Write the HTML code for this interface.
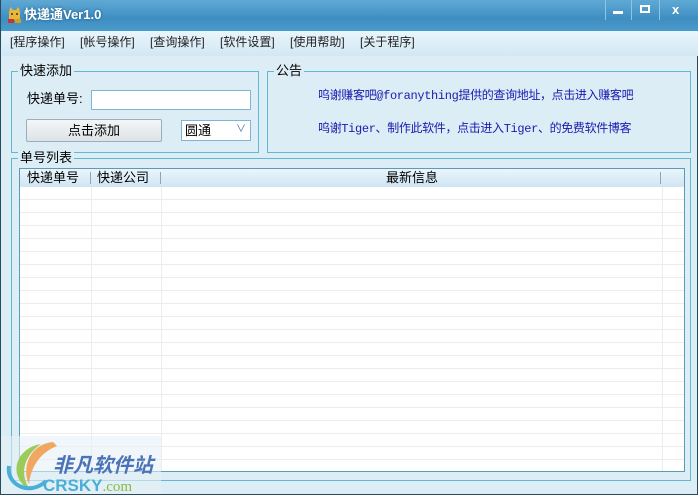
<!DOCTYPE html>
<html><head><meta charset="utf-8"><style>
*{margin:0;padding:0;box-sizing:border-box}
body{width:698px;height:495px;overflow:hidden;font-family:"Liberation Sans","Noto Sans CJK SC",sans-serif;font-size:12px;color:#000;background:#1a2a3a;position:relative;line-height:1.2}
.win{position:absolute;left:0;top:0;width:698px;height:495px;background:#dcedf5;border:1px solid #2a4a60;border-top:none}
.title{position:absolute;left:0;top:0;width:698px;height:31px;background:linear-gradient(#5fa9d4,#3f8ec2 60%,#4a9acb);}
.title span{position:absolute;left:23px;top:7px;color:#fff;font-weight:bold;font-size:13px;text-shadow:0 0 3px #1d5a85}
.menu{position:absolute;left:1px;top:31px;width:696px;height:25px;background:linear-gradient(#e9f5fb,#d2e8f4);}
.menu span{position:absolute;top:5px;color:#222;font-size:12px}
.gb{position:absolute;border:1px solid #5fb8d4}
.gb .lg{position:absolute;top:-9px;left:6px;background:#dcedf5;padding:0 2px;font-size:13px;line-height:16px}
.abs{position:absolute}
.blue{color:#1a1ab0;font-size:12px;letter-spacing:-0.35px;font-family:"Liberation Mono","Noto Sans CJK SC",monospace}
</style></head><body>
<div class="win">
<div class="title">
<svg class="abs" style="left:6px;top:7px" width="16" height="17"><rect x="2" y="3" width="11" height="10" rx="2" fill="#e9b53a"/><path d="M2 3 L4 0 L6 3 M9 3 L11 0 L13 3" fill="#e9b53a"/><circle cx="5" cy="7" r="1" fill="#333"/><circle cx="10" cy="7" r="1" fill="#333"/><rect x="1" y="12" width="6" height="4" fill="#c0392b"/><rect x="8" y="12" width="6" height="4" fill="#d4a020"/></svg>
<span>快递通Ver1.0</span>
<div class="abs" style="left:604px;top:0;width:1px;height:20px;background:#8fc5e3"></div>
<div class="abs" style="left:630px;top:0;width:1px;height:20px;background:#8fc5e3"></div>
<div class="abs" style="left:658px;top:0;width:1px;height:20px;background:#8fc5e3"></div>
<div class="abs" style="left:612px;top:11px;width:10px;height:3px;background:#fff"></div>
<div class="abs" style="left:639px;top:5px;width:10px;height:8px;border:2px solid #fff;border-top-width:2px"></div>
<div class="abs" style="left:671px;top:2px;color:#fff;font-weight:bold;font-size:13px">x</div>
</div>
<div class="menu">
<span style="left:8px;top:4px">[程序操作]</span><span style="left:78px;top:4px">[帐号操作]</span><span style="left:148px;top:4px">[查询操作]</span><span style="left:218px;top:4px">[软件设置]</span><span style="left:288px;top:4px">[使用帮助]</span><span style="left:358px;top:4px">[关于程序]</span>
</div>
<div class="gb" style="left:10px;top:71px;width:248px;height:82px"><div class="lg">快速添加</div></div>
<div class="abs" style="left:26px;top:91px;font-size:13px">快递单号:</div>
<div class="abs" style="left:90px;top:90px;width:160px;height:20px;background:#fff;border:1px solid #7eb4d6"></div>
<div class="abs" style="left:25px;top:119px;width:136px;height:23px;border:1px solid #9aaebb;border-radius:2px;background:linear-gradient(#f4f6f7,#dde3e7);text-align:center;line-height:21px;font-size:13px">点击添加</div>
<div class="abs" style="left:180px;top:120px;width:70px;height:21px;background:#fff;border:1px solid #7eb4d6;font-size:13px;padding-left:3px;line-height:19px">圆通<span style="position:absolute;right:4px;top:-1px;color:#3a6ea8;font-size:10px">&#8744;</span></div>
<div class="gb" style="left:266px;top:71px;width:424px;height:82px"><div class="lg">公告</div></div>
<div class="abs blue" style="left:317px;top:89px">呜谢赚客吧@foranything提供的查询地址，点击进入赚客吧</div>
<div class="abs blue" style="left:317px;top:122px">呜谢Tiger、制作此软件，点击进入Tiger、的免费软件博客</div>
<div class="gb" style="left:10px;top:158px;width:680px;height:323px"><div class="lg">单号列表</div></div>
<div class="abs" style="left:18px;top:168px;width:666px;height:304px;border:1px solid #5a9cb8;background:#fff;overflow:hidden">
<div class="abs" style="left:0;top:0;width:666px;height:18px;background:linear-gradient(#eaf5fb,#cfe5f3)"></div>
<div class="abs" style="left:7px;top:1px;font-size:13px">快递单号</div>
<div class="abs" style="left:77px;top:1px;font-size:13px">快递公司</div>
<div class="abs" style="left:366px;top:1px;font-size:13px">最新信息</div>
<div class="abs" style="left:70px;top:3px;width:1px;height:12px;background:#8aa"></div>
<div class="abs" style="left:140px;top:3px;width:1px;height:12px;background:#8aa"></div>
<div class="abs" style="left:640px;top:3px;width:1px;height:12px;background:#8aa"></div>
<div class="abs" style="left:0;top:18px;width:666px;height:290px;background:repeating-linear-gradient(#fff 0,#fff 12px,#ececec 12px,#ececec 13px)"></div>
<div class="abs" style="left:71px;top:18px;width:1px;height:290px;background:#ececec"></div>
<div class="abs" style="left:141px;top:18px;width:1px;height:290px;background:#ececec"></div>
<div class="abs" style="left:642px;top:18px;width:1px;height:290px;background:#ececec"></div>
</div>
<svg class="abs" style="left:0;top:436px" width="160" height="58"><rect width="160" height="58" fill="#e6f0f5" opacity="0.6"/><path d="M40 8 C15 12 5 40 30 55 C18 40 22 20 40 8Z" fill="#9ccb5a"/><path d="M52 6 C30 8 20 30 28 48 C30 30 40 16 56 10Z" fill="#f0a860"/><path d="M8 30 C5 50 30 60 45 45" stroke="#4aaed8" stroke-width="4" fill="none"/><text x="52" y="36" font-size="20" font-weight="bold" font-style="italic" fill="#4a73b8" font-family="Noto Sans CJK SC,sans-serif">非凡软件站</text><text x="42" y="55" font-size="17" font-weight="bold" fill="#4aaed8" font-family="Liberation Sans,sans-serif">CRSKY<tspan fill="#8ab84a" font-weight="normal" font-family="Liberation Serif,serif" font-size="15">.com</tspan></text></svg>
</div>
</body></html>
